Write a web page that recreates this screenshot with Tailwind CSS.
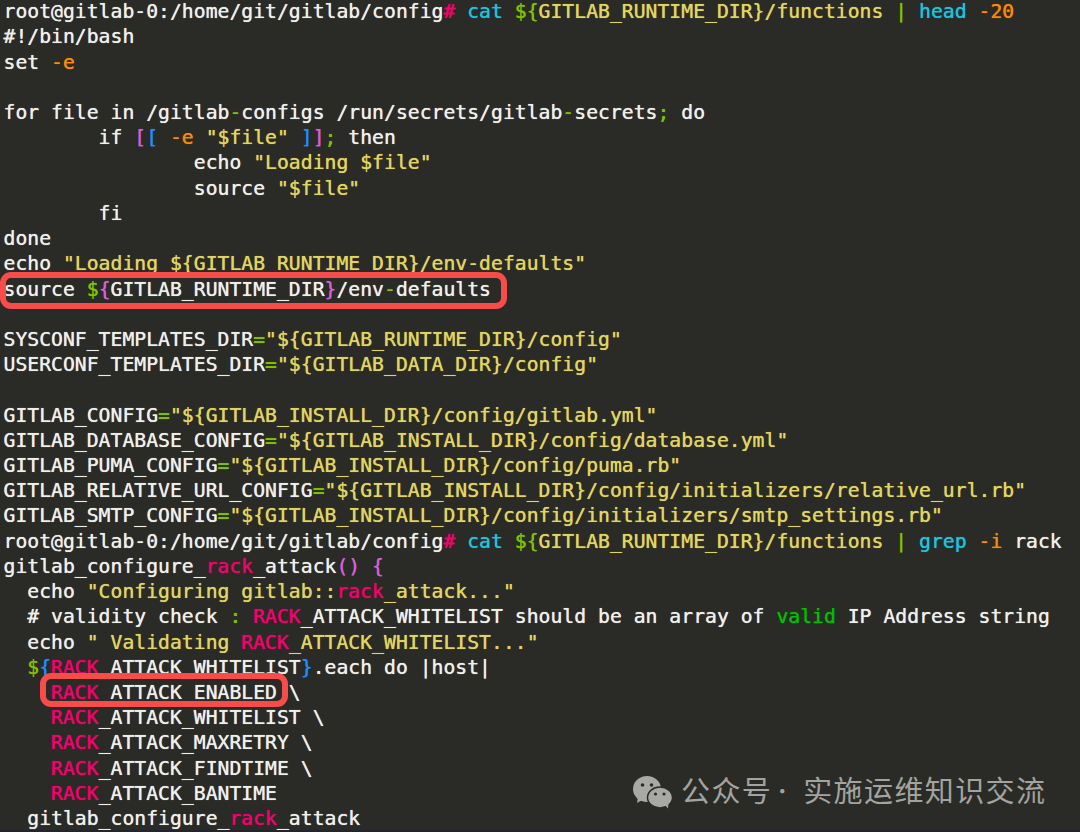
<!DOCTYPE html>
<html lang="en">
<head>
    <meta charset="UTF-8">
    <title>Terminal</title>
    <script src="https://cdn.jsdelivr.net/npm/@tailwindcss/browser@4"></script>
</head>
<body class="bg-[#2a2b26]">
    <div class="relative w-[1080px] h-[832px] overflow-hidden bg-[#2a2b26] font-['DejaVu_Sans_Mono',monospace] text-[19.75px] leading-[25.22px] text-[#efefea]">
        <pre class="pl-[3.5px] -mt-[0.9px] font-['DejaVu_Sans_Mono',monospace] [text-shadow:0_0_0.7px_currentColor]"><div class="h-[25.22px]">root@gitlab-0:/home/git/gitlab/config<span class="text-[#f5006e]">#</span> <span class="text-[#1bc5e0]">cat</span> <span class="text-[#7fc300]">${</span><span class="text-[#e0d561]">GITLAB_RUNTIME_DIR}/functions</span> <span class="text-[#7fc300]">|</span> <span class="text-[#1bc5e0]">head</span> <span class="text-[#fd8a00]">-20</span></div><div class="h-[25.22px]">#!/bin/bash</div><div class="h-[25.22px]">set <span class="text-[#fd8a00]">-e</span></div><div class="h-[25.22px]"></div><div class="h-[25.22px]">for file in /gitlab<span class="text-[#7fc300]">-</span>configs /run/secrets/gitlab<span class="text-[#7fc300]">-</span>secrets<span class="text-[#7fc300]">;</span> do</div><div class="h-[25.22px]">        if <span class="text-[#d65fd6]">[</span><span class="text-[#1e90ff]">[</span> <span class="text-[#fd8a00]">-e</span> <span class="text-[#e0d561]">"$file"</span> <span class="text-[#1e90ff]">]</span><span class="text-[#d65fd6]">]</span><span class="text-[#7fc300]">;</span> then</div><div class="h-[25.22px]">                echo <span class="text-[#e0d561]">"Loading $file"</span></div><div class="h-[25.22px]">                source <span class="text-[#e0d561]">"$file"</span></div><div class="h-[25.22px]">        fi</div><div class="h-[25.22px]">done</div><div class="h-[25.22px]">echo <span class="text-[#e0d561]">"Loading ${GITLAB_RUNTIME_DIR}/env-defaults"</span></div><div class="h-[25.22px]">source <span class="text-[#7fc300]">$</span><span class="text-[#d65fd6]">{</span>GITLAB_RUNTIME_DIR<span class="text-[#d65fd6]">}</span>/env<span class="text-[#7fc300]">-</span>defaults</div><div class="h-[25.22px]"></div><div class="h-[25.22px]">SYSCONF_TEMPLATES_DIR<span class="text-[#7fc300]">=</span><span class="text-[#e0d561]">"${GITLAB_RUNTIME_DIR}/config"</span></div><div class="h-[25.22px]">USERCONF_TEMPLATES_DIR<span class="text-[#7fc300]">=</span><span class="text-[#e0d561]">"${GITLAB_DATA_DIR}/config"</span></div><div class="h-[25.22px]"></div><div class="h-[25.22px]">GITLAB_CONFIG<span class="text-[#7fc300]">=</span><span class="text-[#e0d561]">"${GITLAB_INSTALL_DIR}/config/gitlab.yml"</span></div><div class="h-[25.22px]">GITLAB_DATABASE_CONFIG<span class="text-[#7fc300]">=</span><span class="text-[#e0d561]">"${GITLAB_INSTALL_DIR}/config/database.yml"</span></div><div class="h-[25.22px]">GITLAB_PUMA_CONFIG<span class="text-[#7fc300]">=</span><span class="text-[#e0d561]">"${GITLAB_INSTALL_DIR}/config/puma.rb"</span></div><div class="h-[25.22px]">GITLAB_RELATIVE_URL_CONFIG<span class="text-[#7fc300]">=</span><span class="text-[#e0d561]">"${GITLAB_INSTALL_DIR}/config/initializers/relative_url.rb"</span></div><div class="h-[25.22px]">GITLAB_SMTP_CONFIG<span class="text-[#7fc300]">=</span><span class="text-[#e0d561]">"${GITLAB_INSTALL_DIR}/config/initializers/smtp_settings.rb"</span></div><div class="h-[25.22px]">root@gitlab-0:/home/git/gitlab/config<span class="text-[#f5006e]">#</span> <span class="text-[#1bc5e0]">cat</span> <span class="text-[#7fc300]">${</span><span class="text-[#e0d561]">GITLAB_RUNTIME_DIR}/functions</span> <span class="text-[#7fc300]">|</span> <span class="text-[#1bc5e0]">grep</span> <span class="text-[#fd8a00]">-i</span> rack</div><div class="h-[25.22px]">gitlab_configure_<span class="text-[#f5006e]">rack</span>_attack<span class="text-[#d65fd6]">() {</span></div><div class="h-[25.22px]">  echo <span class="text-[#e0d561]">"Configuring gitlab::</span><span class="text-[#f5006e]">rack</span><span class="text-[#e0d561]">_attack..."</span></div><div class="h-[25.22px]">  # validity check <span class="text-[#7fc300]">:</span> <span class="text-[#f5006e]">RACK</span>_ATTACK_WHITELIST should be an array of <span class="text-[#00c000]">valid</span> IP Address string</div><div class="h-[25.22px]">  echo <span class="text-[#e0d561]">" Validating </span><span class="text-[#f5006e]">RACK</span><span class="text-[#e0d561]">_ATTACK_WHITELIST..."</span></div><div class="h-[25.22px]">  <span class="text-[#7fc300]">$</span><span class="text-[#1e90ff]">{</span><span class="text-[#f5006e]">RACK</span>_ATTACK_WHITELIST<span class="text-[#1e90ff]">}</span>.each do |host|</div><div class="h-[25.22px]">    <span class="text-[#f5006e]">RACK</span>_ATTACK_ENABLED \</div><div class="h-[25.22px]">    <span class="text-[#f5006e]">RACK</span>_ATTACK_WHITELIST \</div><div class="h-[25.22px]">    <span class="text-[#f5006e]">RACK</span>_ATTACK_MAXRETRY \</div><div class="h-[25.22px]">    <span class="text-[#f5006e]">RACK</span>_ATTACK_FINDTIME \</div><div class="h-[25.22px]">    <span class="text-[#f5006e]">RACK</span>_ATTACK_BANTIME</div><div class="h-[25.22px]">  gitlab_configure_<span class="text-[#f5006e]">rack</span>_attack</div></pre>

        <!-- red highlight boxes -->
        <div class="absolute left-0 top-[272px] w-[507px] h-[37px] rounded-[11px] border-[6px] border-[#f64d4b]"></div>
        <div class="absolute left-[40px] top-[673px] w-[248px] h-[34px] rounded-[11px] border-[6px] border-[#f64d4b]"></div>

        <!-- watermark -->
        <div class="absolute left-[632px] top-[771px] flex items-center gap-[7px] text-[#a3a3a0]">
            <svg width="42" height="34" viewBox="0 0 42 34" fill="#a8a8a5">
                <ellipse cx="15" cy="14" rx="14" ry="13"/>
                <path d="M6 22l-1 6 7-4z"/>
                <ellipse cx="28" cy="22.5" rx="12.5" ry="10.5" stroke="#2a2b26" stroke-width="1.5"/>
                <path d="M33 30l3 3.5 .5-6z"/>
                <circle cx="10.5" cy="10" r="1.8" fill="#2a2b26"/><circle cx="19.5" cy="10" r="1.8" fill="#2a2b26"/>
                <circle cx="23.5" cy="19" r="1.6" fill="#2a2b26"/><circle cx="32" cy="19" r="1.6" fill="#2a2b26"/>
            </svg>
            <span class="font-['Noto_Sans_CJK_SC',sans-serif] text-[29px] leading-[36px] tracking-[1.4px] whitespace-pre">公众号<span class="inline-block mr-[9.6px] -translate-y-[3px] text-[20px]">·</span>实施运维知识交流</span>
        </div>

        <div class="absolute left-0 bottom-0 w-full h-[2px] bg-[#24242c]"></div>
    </div>
</body>
</html>
